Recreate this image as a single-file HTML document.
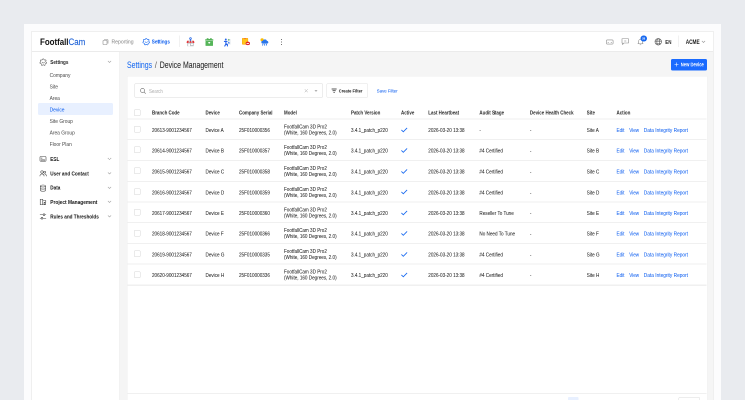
<!DOCTYPE html><html><head><meta charset="utf-8"><title>Device Management</title><style>
*{box-sizing:border-box}
html,body{margin:0;padding:0}
body{width:745px;height:400px;overflow:hidden;position:relative;background:#e9ebef;font-family:"Liberation Sans",sans-serif;color:#262626}
#frame{position:absolute;left:24px;top:24px;width:697px;height:380px;background:#fcfcfd}
#wrap{position:absolute;left:31px;top:31px;width:683px;height:372px;overflow:hidden;background:#f5f5f5}
#wrapb{position:absolute;left:31px;top:31px;width:683px;height:372px;border:1px solid #efefef;border-bottom:none;pointer-events:none}
#app{position:absolute;left:0;top:0;width:1366px;height:760px;transform:scale(.5);transform-origin:0 0;font-size:9.2px;will-change:transform}
.abs{position:absolute}
.t{position:absolute;white-space:nowrap;line-height:12px;transform:translateY(-50%) scaleY(1.1);color:#1a1a1a;-webkit-text-stroke:0.060px currentColor}
.b{font-weight:700}
#hdr{position:absolute;left:0;top:0;width:1366px;height:42px;background:#fff;border-bottom:2px solid #ebebeb}
#side{position:absolute;left:0;top:42px;width:177px;height:720px;background:#fff;border-right:1px solid #efefef}
#card{position:absolute;left:192.5px;top:90.5px;width:1159px;height:680px;background:#fff;box-shadow:0 0 0 1px #f0f0f0}
.hl{position:absolute;left:0;width:1158px;height:2px;background:#f0f0f0}
.cb{position:absolute;width:13px;height:13px;border:1px solid #d6d6d6;border-radius:2px;background:#fff}
.t.b{transform:translateY(-50%) scaleY(1.1);color:#2a2a2a;-webkit-text-stroke:0}
.t.blue,.blue{color:#1463f0}
.t.gray,.gray{color:#555}
svg{position:absolute;overflow:visible}
</style></head><body>
<div id="frame"></div><div id="wrap"><div id="app">
<div id="hdr">
<div class="t b" style="left:18px;top:21.5px;font-size:15.9px;line-height:20px;color:#111;letter-spacing:-0.05px">Footfall<span style="font-weight:400;color:#1f63d8;letter-spacing:0;-webkit-text-stroke:0.25px #1f63d8">Cam</span></div>
<svg style="left:143px;top:15.8px" width="12" height="12" viewBox="0 0 12 12" fill="none" stroke="#8c8c8c" stroke-width="1.2"><rect x="1" y="2.5" width="8" height="9" rx="1.5"/><path d="M3 1h6.5a1.5 1.5 0 0 1 1.5 1.5V9"/></svg>
<div class="t" style="left:161px;top:22.2px;font-size:10.2px;color:#8c8c8c">Reporting</div>
<svg style="left:222.5px;top:14.3px" width="15" height="15" viewBox="0 0 15 15" fill="none" stroke="#1668f0" stroke-width="1.2"><path d="M6.74 0.74L8.26 0.74L9.22 2.59L10.27 3.1L12.31 2.69L13.26 3.88L12.41 5.78L12.67 6.92L14.26 8.26L13.92 9.75L11.9 10.27L11.18 11.18L11.12 13.26L9.75 13.92L8.08 12.67L6.92 12.67L5.25 13.92L3.88 13.26L3.82 11.18L3.1 10.27L1.08 9.75L0.74 8.26L2.33 6.92L2.59 5.78L1.74 3.88L2.69 2.69L4.73 3.1L5.78 2.59Z" stroke-linejoin="round"/><path d="M5.2 7.3a2.4 2.4 0 0 0 4.6 0" stroke-linecap="round"/></svg>
<div class="t b blue" style="left:241.6px;top:22.2px;font-size:9.2px">Settings</div>
<div class="abs" style="left:296px;top:9px;width:1px;height:23px;background:#e4e4e4"></div>
<svg style="left:311px;top:11.5px" width="16" height="19" viewBox="0 0 16 19"><path d="M8 0.6c-1.5 0-2.5 1.1-2.5 2.4 0 1.6 2.5 4.4 2.5 4.4s2.5-2.8 2.5-4.4c0-1.3-1-2.4-2.5-2.4z" fill="#2f6fe8"/><circle cx="8" cy="2.9" r=".9" fill="#fff"/><path d="M1.2 7.4h13.6l1 3a1.9 1.9 0 0 1-3.9.3 1.9 1.9 0 0 1-3.9 0 1.9 1.9 0 0 1-3.9 0 1.9 1.9 0 0 1-3.9-.3z" fill="#e5383b"/><path d="M4.5 7.4h2.2l-.2 3.8h-2.3zM9.3 7.4h2.2l.3 3.8h-2.3z" fill="#bfe3ea"/><path d="M8 5.5l1.3 2.5h-2.6z" fill="#2f6fe8"/><rect x="1.7" y="12" width="12.6" height="6.4" fill="#b4b8be"/><rect x="3.3" y="13" width="4" height="5.4" fill="#fff"/><rect x="8.9" y="13" width="4" height="3.4" fill="#fff"/></svg>
<svg style="left:348px;top:14px" width="17" height="16" viewBox="0 0 17 16"><path d="M3.5 0.5h3l1 1.5h2l1-1.5h3v2.6h-10z" fill="#50b054"/><rect x="0.4" y="2.6" width="16.2" height="2.6" rx=".5" fill="#50b054"/><rect x="1" y="6" width="15" height="9.8" rx=".8" fill="#55b559"/><path d="M6.3 8h4.4l-1 3h-2.4z" fill="#fff"/></svg>
<svg style="left:386px;top:14.5px" width="14" height="16" viewBox="0 0 14 16"><rect x="7.5" y="1" width="6" height="11" fill="#eceff4"/><circle cx="3.6" cy="2" r="1.9" fill="#2563eb"/><path d="M0.8 5.8h5.2M3.8 5.8v5.2M3.8 11l-2.2 4M3.8 10.5l3 1.5v3" stroke="#2563eb" stroke-width="2.2" fill="none" stroke-linecap="round" stroke-linejoin="round"/><path d="M9.7 0.5l.7 1.5 1.5.7-1.5.7-.7 1.5-.7-1.5-1.5-.7 1.5-.7z" fill="#43a047"/><path d="M9.6 6.2l2.3 3.6h-4.6z" fill="#2f6fe8"/></svg>
<svg style="left:421px;top:13px" width="19" height="18" viewBox="0 0 19 18"><rect x="1.6" y="1.6" width="11" height="12" rx=".8" fill="#ffc61a" stroke="#fbab18" stroke-width="1.2"/><rect x="5.3" y="1" width="3.6" height="2.2" fill="#f4743b"/><ellipse cx="12.6" cy="11.8" rx="4.4" ry="3.5" fill="#e0242b"/><rect x="10.1" y="10.9" width="5" height="1.9" rx=".9" fill="#fff"/></svg>
<svg style="left:457px;top:13px" width="20" height="18" viewBox="0 0 20 18"><circle cx="5.2" cy="4.6" r="3.2" fill="#fbbc04"/><path d="M6.5 12.2a2.9 2.9 0 0 1 .2-5.8 4.3 4.3 0 0 1 8.1.4 2.7 2.7 0 0 1 .3 5.4z" fill="#2b76ea"/><path d="M6.8 13.6l-.6 1.8M10.5 13.6l-.6 1.8M14.2 13.6l-.6 1.8" stroke="#2b76ea" stroke-width="1.7" stroke-linecap="round"/></svg>
<div class="abs" style="left:499.5px;top:15.9px;width:2.2px;height:2.2px;border-radius:50%;background:#444"></div>
<div class="abs" style="left:499.5px;top:20.9px;width:2.2px;height:2.2px;border-radius:50%;background:#444"></div>
<div class="abs" style="left:499.5px;top:25.9px;width:2.2px;height:2.2px;border-radius:50%;background:#444"></div>
<svg style="left:1150px;top:16.5px" width="15" height="10" viewBox="0 0 15 10" fill="none" stroke="#8c8c8c" stroke-width="1.2"><rect x=".8" y=".8" width="13.4" height="8.4" rx="1.8"/><path d="M3.5 6h1.8M9.7 6h1.8" stroke-width="1.6"/></svg>
<svg style="left:1181px;top:14px" width="15" height="14" viewBox="0 0 15 14" fill="none" stroke="#8c8c8c" stroke-width="1.2"><path d="M1 1.5h13v8.5h-9l-3 3v-3h-1z" stroke-linejoin="round"/><path d="M5.5 6h4"/></svg>
<svg style="left:1212px;top:14px" width="14" height="15" viewBox="0 0 14 15" fill="none" stroke="#8c8c8c" stroke-width="1.2"><path d="M2 11.5c1-1.2 1.2-2.5 1.2-5a3.8 3.8 0 0 1 7.6 0c0 2.5.2 3.8 1.2 5z" stroke-linejoin="round"/><path d="M5.5 13.5h3"/></svg>
<div class="abs" style="left:1218.5px;top:8.5px;width:13.4px;height:12px;border-radius:6px;background:#1668f0;color:#fff;font-size:5.5px;line-height:12px;text-align:center;font-weight:700">28</div>
<svg style="left:1247px;top:14px" width="15" height="15" viewBox="0 0 15 15" fill="none" stroke="#555" stroke-width="1.2"><circle cx="7.5" cy="7.5" r="6.5"/><ellipse cx="7.5" cy="7.5" rx="2.8" ry="6.5"/><path d="M1 7.5h13M2 4h11M2 11h11" stroke-width="1"/></svg>
<div class="t b" style="left:1268.5px;top:21.8px;font-size:8.9px;color:#333;transform:translateY(-50%) scaleY(1.25)">EN</div>
<div class="abs" style="left:1295px;top:9px;width:1px;height:23px;background:#e4e4e4"></div>
<div class="t b" style="left:1309.4px;top:21.6px;font-size:9.5px;color:#222;transform:translateY(-50%) scaleY(1.25)">ACME</div>
<svg style="left:1341px;top:19px" width="8" height="5" viewBox="0 0 8 5" fill="none" stroke="#888" stroke-width="1.1"><path d="M.8.8l3.2 3.2 3.2-3.2"/></svg>
</div>
<div id="side">
<svg style="left:16.5px;top:12.5px" width="15" height="15" viewBox="0 0 15 15" fill="none" stroke="#555" stroke-width="1.1"><path d="M6.74 0.74L8.26 0.74L9.22 2.59L10.27 3.1L12.31 2.69L13.26 3.88L12.41 5.78L12.67 6.92L14.26 8.26L13.92 9.75L11.9 10.27L11.18 11.18L11.12 13.26L9.75 13.92L8.08 12.67L6.92 12.67L5.25 13.92L3.88 13.26L3.82 11.18L3.1 10.27L1.08 9.75L0.74 8.26L2.33 6.92L2.59 5.78L1.74 3.88L2.69 2.69L4.73 3.1L5.78 2.59Z" stroke-linejoin="round"/><path d="M5.2 7.3a2.4 2.4 0 0 0 4.6 0" stroke-linecap="round"/></svg>
<div class="t b" style="left:38.6px;top:20.8px;font-size:9.2px">Settings</div>
<svg style="left:153px;top:17px" width="8" height="5" viewBox="0 0 8 5" fill="none" stroke="#999" stroke-width="1.1"><path d="M.8.8l3.2 3.2 3.2-3.2"/></svg>
<div class="t gray" style="left:37.2px;top:47.2px;font-size:9.75px">Company</div>
<div class="t gray" style="left:37.2px;top:70.1px;font-size:9.75px">Site</div>
<div class="t gray" style="left:37.2px;top:93px;font-size:9.75px">Area</div>
<div class="abs" style="left:14px;top:102.4px;width:150px;height:23.2px;border-radius:3px;background:#e8f0ff"></div>
<div class="t blue" style="left:37.2px;top:115.89px;font-size:9.75px">Device</div>
<div class="t gray" style="left:37.2px;top:138.8px;font-size:9.75px">Site Group</div>
<div class="t gray" style="left:37.2px;top:161.7px;font-size:9.75px">Area Group</div>
<div class="t gray" style="left:37.2px;top:184.59px;font-size:9.75px">Floor Plan</div>
<svg style="left:17px;top:207px" width="14" height="14" viewBox="0 0 14 14" fill="none" stroke="#444" stroke-width="1.2"><rect x="1" y="2" width="12" height="9.5" rx="1.5"/><path d="M3.5 8.5h7v1.5h-7z" stroke-width=".9"/><path d="M3.5 5h2"/></svg>
<div class="t b" style="left:38.6px;top:214.8px;font-size:9.3px;color:#151515">ESL</div>
<svg style="left:153px;top:211px" width="8" height="5" viewBox="0 0 8 5" fill="none" stroke="#999" stroke-width="1.1"><path d="M.8.8l3.2 3.2 3.2-3.2"/></svg>
<svg style="left:17px;top:236px" width="14" height="14" viewBox="0 0 14 14" fill="none" stroke="#444" stroke-width="1.2"><circle cx="5" cy="4" r="2.5"/><path d="M.8 12.5c0-3 2-4.5 4.2-4.5s4.2 1.5 4.2 4.5"/><circle cx="10.5" cy="4.5" r="2"/><path d="M10.5 8c2 0 3.2 1.5 3.2 4.5"/></svg>
<div class="t b" style="left:38.6px;top:243.8px;font-size:9.3px;color:#151515">User and Contact</div>
<svg style="left:153px;top:240px" width="8" height="5" viewBox="0 0 8 5" fill="none" stroke="#999" stroke-width="1.1"><path d="M.8.8l3.2 3.2 3.2-3.2"/></svg>
<svg style="left:17px;top:264.6px" width="14" height="14" viewBox="0 0 14 14" fill="none" stroke="#444" stroke-width="1.2"><ellipse cx="7" cy="3" rx="5" ry="2"/><path d="M2 3v8.5c0 1.1 2.2 2 5 2s5-.9 5-2V3M2 7.2c0 1.1 2.2 2 5 2s5-.9 5-2"/></svg>
<div class="t b" style="left:38.6px;top:272.4px;font-size:9.3px;color:#151515">Data</div>
<svg style="left:153px;top:268.6px" width="8" height="5" viewBox="0 0 8 5" fill="none" stroke="#999" stroke-width="1.1"><path d="M.8.8l3.2 3.2 3.2-3.2"/></svg>
<svg style="left:17px;top:293.2px" width="14" height="14" viewBox="0 0 14 14" fill="none" stroke="#444" stroke-width="1.2"><path d="M1.5 1.5h5v11h-5zM6.5 4h6v3.5h-4M6.5 12.5h6.5"/><circle cx="10.5" cy="10" r="1.5"/></svg>
<div class="t b" style="left:38.6px;top:301px;font-size:9.65px;color:#151515">Project Management</div>
<svg style="left:153px;top:297.2px" width="8" height="5" viewBox="0 0 8 5" fill="none" stroke="#999" stroke-width="1.1"><path d="M.8.8l3.2 3.2 3.2-3.2"/></svg>
<svg style="left:17px;top:321.8px" width="14" height="14" viewBox="0 0 14 14" fill="none" stroke="#444" stroke-width="1.2"><path d="M.8 3.5h12.4M.8 10.5h12.4"/><circle cx="9" cy="3.5" r="1.8" fill="#fff"/><circle cx="5" cy="10.5" r="1.8" fill="#fff"/></svg>
<div class="t b" style="left:38.6px;top:329.6px;font-size:9.3px;color:#151515">Rules and Thresholds</div>
<svg style="left:153px;top:325.8px" width="8" height="5" viewBox="0 0 8 5" fill="none" stroke="#999" stroke-width="1.1"><path d="M.8.8l3.2 3.2 3.2-3.2"/></svg>
</div>
<div class="t" style="left:192px;top:68.4px;font-size:13.9px;line-height:18px;color:#222;transform:translateY(-50%) scaleY(1.26)"><span style="color:#1668f0">Settings</span><span style="margin:0 6px 0 5.5px;color:#555">/</span>Device Management</div>
<div class="abs" style="left:1280px;top:56px;width:72px;height:22.6px;border-radius:3px;background:#1a6bff"></div>
<svg style="left:1287px;top:63px" width="8" height="8" viewBox="0 0 8 8" stroke="#fff" stroke-width="1.1"><path d="M4 0v8M0 4h8"/></svg>
<div class="t b" style="left:1299.6px;top:67.4px;font-size:8.3px;color:#fff;transform:translateY(-50%) scaleY(1.25)">New Device</div>
<div id="card">
<div class="abs" style="left:14.5px;top:14.09px;width:377px;height:28.4px;border:1px solid #dcdcdc;border-radius:2px;background:#fff"></div>
<svg style="left:25px;top:23.7px" width="12" height="12" viewBox="0 0 10 10" fill="none" stroke="#666" stroke-width="1"><circle cx="4.2" cy="4.2" r="3.4"/><path d="M6.8 6.8l2.7 2.7"/></svg>
<div class="t" style="left:43.5px;top:29.7px;font-size:8.7px;color:#b0b0b0;transform:translateY(-50%) scaleY(1.35)">Search</div>
<svg style="left:354.5px;top:25.5px" width="7" height="7" viewBox="0 0 7 7" stroke="#9a9a9a" stroke-width=".9"><path d="M.5.5l6 6M6.5.5l-6 6"/></svg>
<svg style="left:374px;top:27.5px" width="6" height="4" viewBox="0 0 6 4" fill="#b0b0b0"><path d="M0 0h6l-3 4z"/></svg>
<div class="abs" style="left:398.5px;top:14.09px;width:83px;height:28.4px;border:1px solid #e2e2e2;border-radius:2px;background:#fff"></div>
<svg style="left:408px;top:24.5px" width="10.5" height="9" viewBox="0 0 10 9" stroke="#222" stroke-width="1.4"><path d="M0 1h10M1.8 4.5h6.4M3.8 8h2.4"/></svg>
<div class="t b" style="left:423.1px;top:30.2px;font-size:8.1px;color:#1a1a1a;transform:translateY(-50%) scaleY(1.2)">Create Filter</div>
<div class="t blue" style="left:499.1px;top:29.29px;font-size:8.7px">Save Filter</div>
<div class="cb" style="left:13.9px;top:66.39px"></div>
<div class="t b" style="left:49.5px;top:72.49px;font-size:8.9px;transform:translateY(-50%) scaleY(1.22)">Branch Code</div>
<div class="t b" style="left:156.5px;top:72.49px;font-size:8.9px;transform:translateY(-50%) scaleY(1.22)">Device</div>
<div class="t b" style="left:223.5px;top:72.49px;font-size:8.9px;transform:translateY(-50%) scaleY(1.22)">Company Serial</div>
<div class="t b" style="left:313.5px;top:72.49px;font-size:8.9px;transform:translateY(-50%) scaleY(1.22)">Model</div>
<div class="t b" style="left:447.5px;top:72.49px;font-size:8.9px;transform:translateY(-50%) scaleY(1.22)">Patch Version</div>
<div class="t b" style="left:547.5px;top:72.49px;font-size:8.9px;transform:translateY(-50%) scaleY(1.22)">Active</div>
<div class="t b" style="left:602.1px;top:72.49px;font-size:8.9px;transform:translateY(-50%) scaleY(1.22)">Last Heartbeat</div>
<div class="t b" style="left:704.3px;top:72.49px;font-size:8.9px;transform:translateY(-50%) scaleY(1.22)">Audit Stage</div>
<div class="t b" style="left:805.3px;top:72.49px;font-size:8.9px;transform:translateY(-50%) scaleY(1.22)">Device Health Check</div>
<div class="t b" style="left:919.09px;top:72.49px;font-size:8.9px;transform:translateY(-50%) scaleY(1.22)">Site</div>
<div class="t b" style="left:978.5px;top:72.49px;font-size:8.9px;transform:translateY(-50%) scaleY(1.22)">Action</div>
<div class="hl" style="top:84.5px"></div>
<div class="hl" style="top:125.19px"></div>
<div class="hl" style="top:167.1px"></div>
<div class="hl" style="top:209px"></div>
<div class="hl" style="top:250.5px"></div>
<div class="hl" style="top:291.6px"></div>
<div class="hl" style="top:333.1px"></div>
<div class="hl" style="top:374.5px"></div>
<div class="hl" style="top:416.1px"></div>
<div class="cb" style="left:13.9px;top:99.64px"></div>
<div class="t" style="left:49.5px;top:108.25px">20613-9001234567</div>
<div class="t" style="left:156.5px;top:108.25px">Device A</div>
<div class="t" style="left:223.5px;top:108.25px">25F010000356</div>
<div class="t" style="left:313.5px;top:108.85px;line-height:11.4px">FootfallCam 3D Pro2<br>(White, 160 Degrees, 2.0)</div>
<div class="t" style="left:447.5px;top:108.25px">3.4.1_patch_p220</div>
<svg style="left:547.7px;top:102.05px" width="13" height="10" viewBox="0 0 13 10" fill="none" stroke="#1668f0" stroke-width="1.7"><path d="M.8 4.8l3.8 3.8 7.6-7.8"/></svg>
<div class="t" style="left:602.1px;top:108.25px">2026-03-20 13:38</div>
<div class="t" style="left:704.3px;top:108.25px">-</div>
<div class="t" style="left:805.3px;top:108.25px">-</div>
<div class="t" style="left:919.09px;top:108.25px">Site A</div>
<div class="t blue" style="left:978.5px;top:108.25px">Edit</div>
<div class="t blue" style="left:1003.9px;top:108.25px">View</div>
<div class="t blue" style="left:1033.1px;top:108.25px;font-size:9.58px">Data Integrity Report</div>
<div class="cb" style="left:13.9px;top:140.95px"></div>
<div class="t" style="left:49.5px;top:149.15px">20614-9001234567</div>
<div class="t" style="left:156.5px;top:149.15px">Device B</div>
<div class="t" style="left:223.5px;top:149.15px">25F010000357</div>
<div class="t" style="left:313.5px;top:149.75px;line-height:11.4px">FootfallCam 3D Pro2<br>(White, 160 Degrees, 2.0)</div>
<div class="t" style="left:447.5px;top:149.15px">3.4.1_patch_p220</div>
<svg style="left:547.7px;top:143.35px" width="13" height="10" viewBox="0 0 13 10" fill="none" stroke="#1668f0" stroke-width="1.7"><path d="M.8 4.8l3.8 3.8 7.6-7.8"/></svg>
<div class="t" style="left:602.1px;top:149.15px">2026-03-20 13:38</div>
<div class="t" style="left:704.3px;top:149.15px">#4 Certified</div>
<div class="t" style="left:805.3px;top:149.15px">-</div>
<div class="t" style="left:919.09px;top:149.15px">Site B</div>
<div class="t blue" style="left:978.5px;top:149.15px">Edit</div>
<div class="t blue" style="left:1003.9px;top:149.15px">View</div>
<div class="t blue" style="left:1033.1px;top:149.15px;font-size:9.58px">Data Integrity Report</div>
<div class="cb" style="left:13.9px;top:182.85px"></div>
<div class="t" style="left:49.5px;top:191.05px">20615-9001234567</div>
<div class="t" style="left:156.5px;top:191.05px">Device C</div>
<div class="t" style="left:223.5px;top:191.05px">25F010000358</div>
<div class="t" style="left:313.5px;top:191.65px;line-height:11.4px">FootfallCam 3D Pro2<br>(White, 160 Degrees, 2.0)</div>
<div class="t" style="left:447.5px;top:191.05px">3.4.1_patch_p220</div>
<svg style="left:547.7px;top:185.25px" width="13" height="10" viewBox="0 0 13 10" fill="none" stroke="#1668f0" stroke-width="1.7"><path d="M.8 4.8l3.8 3.8 7.6-7.8"/></svg>
<div class="t" style="left:602.1px;top:191.05px">2026-03-20 13:38</div>
<div class="t" style="left:704.3px;top:191.05px">#4 Certified</div>
<div class="t" style="left:805.3px;top:191.05px">-</div>
<div class="t" style="left:919.09px;top:191.05px">Site C</div>
<div class="t blue" style="left:978.5px;top:191.05px">Edit</div>
<div class="t blue" style="left:1003.9px;top:191.05px">View</div>
<div class="t blue" style="left:1033.1px;top:191.05px;font-size:9.58px">Data Integrity Report</div>
<div class="cb" style="left:13.9px;top:224.55px"></div>
<div class="t" style="left:49.5px;top:233.15px">20616-9001234567</div>
<div class="t" style="left:156.5px;top:233.15px">Device D</div>
<div class="t" style="left:223.5px;top:233.15px">25F010000359</div>
<div class="t" style="left:313.5px;top:233.75px;line-height:11.4px">FootfallCam 3D Pro2<br>(White, 160 Degrees, 2.0)</div>
<div class="t" style="left:447.5px;top:233.15px">3.4.1_patch_p220</div>
<svg style="left:547.7px;top:226.95px" width="13" height="10" viewBox="0 0 13 10" fill="none" stroke="#1668f0" stroke-width="1.7"><path d="M.8 4.8l3.8 3.8 7.6-7.8"/></svg>
<div class="t" style="left:602.1px;top:233.15px">2026-03-20 13:38</div>
<div class="t" style="left:704.3px;top:233.15px">#4 Certified</div>
<div class="t" style="left:805.3px;top:233.15px">-</div>
<div class="t" style="left:919.09px;top:233.15px">Site D</div>
<div class="t blue" style="left:978.5px;top:233.15px">Edit</div>
<div class="t blue" style="left:1003.9px;top:233.15px">View</div>
<div class="t blue" style="left:1033.1px;top:233.15px;font-size:9.58px">Data Integrity Report</div>
<div class="cb" style="left:13.9px;top:265.85px"></div>
<div class="t" style="left:49.5px;top:274.05px">20617-9001234567</div>
<div class="t" style="left:156.5px;top:274.05px">Device E</div>
<div class="t" style="left:223.5px;top:274.05px">25F010000360</div>
<div class="t" style="left:313.5px;top:274.65px;line-height:11.4px">FootfallCam 3D Pro2<br>(White, 160 Degrees, 2.0)</div>
<div class="t" style="left:447.5px;top:274.05px">3.4.1_patch_p220</div>
<svg style="left:547.7px;top:268.25px" width="13" height="10" viewBox="0 0 13 10" fill="none" stroke="#1668f0" stroke-width="1.7"><path d="M.8 4.8l3.8 3.8 7.6-7.8"/></svg>
<div class="t" style="left:602.1px;top:274.05px">2026-03-20 13:38</div>
<div class="t" style="left:704.3px;top:274.05px">Reseller To Tune</div>
<div class="t" style="left:805.3px;top:274.05px">-</div>
<div class="t" style="left:919.09px;top:274.05px">Site E</div>
<div class="t blue" style="left:978.5px;top:274.05px">Edit</div>
<div class="t blue" style="left:1003.9px;top:274.05px">View</div>
<div class="t blue" style="left:1033.1px;top:274.05px;font-size:9.58px">Data Integrity Report</div>
<div class="cb" style="left:13.9px;top:307.15px"></div>
<div class="t" style="left:49.5px;top:315.35px">20618-9001234567</div>
<div class="t" style="left:156.5px;top:315.35px">Device F</div>
<div class="t" style="left:223.5px;top:315.35px">25F010000366</div>
<div class="t" style="left:313.5px;top:315.95px;line-height:11.4px">FootfallCam 3D Pro2<br>(White, 160 Degrees, 2.0)</div>
<div class="t" style="left:447.5px;top:315.35px">3.4.1_patch_p220</div>
<svg style="left:547.7px;top:309.55px" width="13" height="10" viewBox="0 0 13 10" fill="none" stroke="#1668f0" stroke-width="1.7"><path d="M.8 4.8l3.8 3.8 7.6-7.8"/></svg>
<div class="t" style="left:602.1px;top:315.35px">2026-03-20 13:38</div>
<div class="t" style="left:704.3px;top:315.35px">No Need To Tune</div>
<div class="t" style="left:805.3px;top:315.35px">-</div>
<div class="t" style="left:919.09px;top:315.35px">Site F</div>
<div class="t blue" style="left:978.5px;top:315.35px">Edit</div>
<div class="t blue" style="left:1003.9px;top:315.35px">View</div>
<div class="t blue" style="left:1033.1px;top:315.35px;font-size:9.58px">Data Integrity Report</div>
<div class="cb" style="left:13.9px;top:348.6px"></div>
<div class="t" style="left:49.5px;top:357.2px">20619-9001234567</div>
<div class="t" style="left:156.5px;top:357.2px">Device G</div>
<div class="t" style="left:223.5px;top:357.2px">25F010000335</div>
<div class="t" style="left:313.5px;top:357.8px;line-height:11.4px">FootfallCam 3D Pro2<br>(White, 160 Degrees, 2.0)</div>
<div class="t" style="left:447.5px;top:357.2px">3.4.1_patch_p220</div>
<svg style="left:547.7px;top:351px" width="13" height="10" viewBox="0 0 13 10" fill="none" stroke="#1668f0" stroke-width="1.7"><path d="M.8 4.8l3.8 3.8 7.6-7.8"/></svg>
<div class="t" style="left:602.1px;top:357.2px">2026-03-20 13:38</div>
<div class="t" style="left:704.3px;top:357.2px">#4 Certified</div>
<div class="t" style="left:805.3px;top:357.2px">-</div>
<div class="t" style="left:919.09px;top:357.2px">Site G</div>
<div class="t blue" style="left:978.5px;top:357.2px">Edit</div>
<div class="t blue" style="left:1003.9px;top:357.2px">View</div>
<div class="t blue" style="left:1033.1px;top:357.2px;font-size:9.58px">Data Integrity Report</div>
<div class="cb" style="left:13.9px;top:390.1px"></div>
<div class="t" style="left:49.5px;top:398.3px">20620-9001234567</div>
<div class="t" style="left:156.5px;top:398.3px">Device H</div>
<div class="t" style="left:223.5px;top:398.3px">25F010000336</div>
<div class="t" style="left:313.5px;top:398.9px;line-height:11.4px">FootfallCam 3D Pro2<br>(White, 160 Degrees, 2.0)</div>
<div class="t" style="left:447.5px;top:398.3px">3.4.1_patch_p220</div>
<svg style="left:547.7px;top:392.5px" width="13" height="10" viewBox="0 0 13 10" fill="none" stroke="#1668f0" stroke-width="1.7"><path d="M.8 4.8l3.8 3.8 7.6-7.8"/></svg>
<div class="t" style="left:602.1px;top:398.3px">2026-03-20 13:38</div>
<div class="t" style="left:704.3px;top:398.3px">#4 Certified</div>
<div class="t" style="left:805.3px;top:398.3px">-</div>
<div class="t" style="left:919.09px;top:398.3px">Site H</div>
<div class="t blue" style="left:978.5px;top:398.3px">Edit</div>
<div class="t blue" style="left:1003.9px;top:398.3px">View</div>
<div class="t blue" style="left:1033.1px;top:398.3px;font-size:9.58px">Data Integrity Report</div>
<div class="hl" style="top:633.5px"></div>
<div class="abs" style="left:881.09px;top:641.1px;width:21.6px;height:22px;border-radius:2px;background:#e8f0ff"></div>
<div class="abs" style="left:1102.3px;top:641.5px;width:43px;height:22px;border:1px solid #dcdcdc;border-radius:3px;background:#fff"></div>
</div>
</div></div><div id="wrapb"></div></body></html>
